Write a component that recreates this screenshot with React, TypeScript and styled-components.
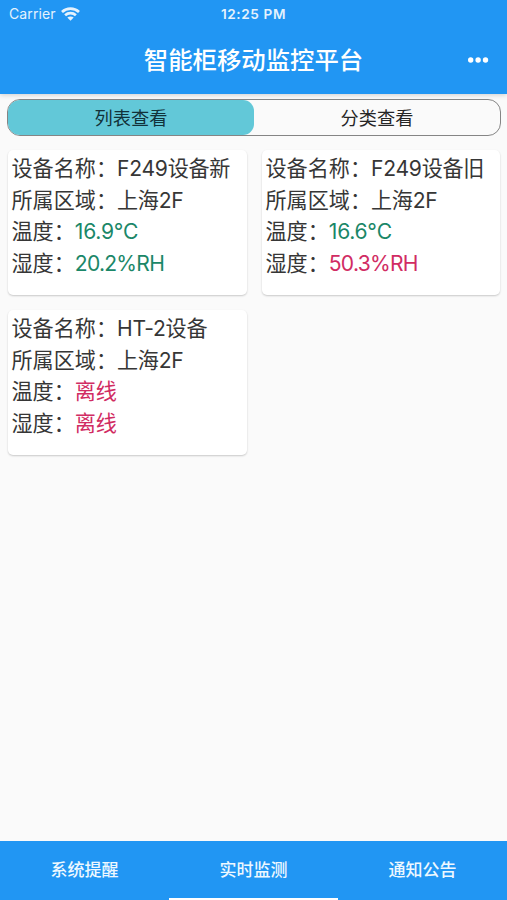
import React from 'react';
import styled, { createGlobalStyle } from 'styled-components';

const GlobalStyle = createGlobalStyle`
  * { box-sizing: border-box; }
  body {
    margin: 0;
    background: #fafafa;
    font-family: Inter, "Noto Sans CJK SC", sans-serif;
  }
`;

const Screen = styled.div`
  display: flex;
  flex-direction: column;
  height: 100vh;
  overflow: hidden;
  background: #fafafa;
`;

const Header = styled.header`
  flex: none;
  height: 94px;
  background: #2196f3;
  color: #fff;
  box-shadow: 0 1px 5px rgba(0, 0, 0, 0.18);
`;

const StatusBar = styled.div`
  display: grid;
  grid-template-columns: 1fr auto 1fr;
  align-items: center;
  height: 27px;
  padding: 0 9px;
  color: #e4f2fd;
`;

const Carrier = styled.div`
  display: flex;
  align-items: center;
  gap: 5.5px;
  font-size: 14px;
  line-height: 18px;
  letter-spacing: 0.12px;
`;

const Clock = styled.time`
  font-size: 13.6px;
  font-weight: 600;
  letter-spacing: 0.6px;
`;

const TitleBar = styled.div`
  display: grid;
  grid-template-columns: 1fr auto 1fr;
  align-items: center;
  height: 65px;
  padding: 0 18px;
`;

const Title = styled.h1`
  grid-column: 2;
  margin: 0;
  font-size: 24.4px;
  font-weight: 500;
  line-height: 36px;
`;

const MoreButton = styled.button`
  display: flex;
  justify-self: end;
  padding: 0;
  border: 0;
  background: none;
  color: inherit;
`;

const Segments = styled.div`
  flex: none;
  display: flex;
  height: 37px;
  margin: 5px 6px 0 7px;
  border: 1px solid #858585;
  border-radius: 13px;
  overflow: hidden;
`;

const Segment = styled.button<{ $active?: boolean }>`
  flex: 1;
  padding: 0;
  border: 0;
  border-radius: 11px;
  background: ${(p) => (p.$active ? '#62c8d8' : 'transparent')};
  color: ${(p) => (p.$active ? '#12323a' : '#262626')};
  font-family: inherit;
  font-size: 18.2px;
  line-height: 34px;
`;

const DeviceGrid = styled.main`
  flex: 1;
  display: grid;
  grid-template-columns: 239px 238px;
  grid-auto-rows: 145px;
  align-content: start;
  gap: 15px;
  padding: 14px 7px 0 8px;
`;

const Card = styled.article`
  padding: 3px 3.5px;
  border-radius: 5px;
  background: #fff;
  box-shadow: 0 1px 2px rgba(0, 0, 0, 0.2);
`;

const Field = styled.div`
  height: 31.7px;
  color: #363636;
  font-size: 21.1px;
  line-height: 32px;
  white-space: nowrap;
`;

type Tone = 'plain' | 'ok' | 'alert';

const toneColors: Record<Tone, string> = {
  plain: '#363636',
  ok: '#1b8768',
  alert: '#d12c63',
};

const Value = styled.span<{ $tone: Tone; $tight?: boolean }>`
  color: ${(p) => toneColors[p.$tone]};
  letter-spacing: ${(p) => (p.$tight ? '-0.75px' : '-0.25px')};
`;

const BottomNav = styled.nav`
  flex: none;
  display: grid;
  grid-template-columns: repeat(3, 1fr);
  grid-template-rows: 57px 2px;
  height: 59px;
  background: #2196f3;
`;

const NavItem = styled.button`
  padding: 0 0 2px;
  border: 0;
  background: none;
  color: #eef8ff;
  font-family: inherit;
  font-size: 17px;
  font-weight: 500;
`;

const HomeIndicator = styled.div`
  grid-column: 2;
  background: #fff;
`;

const WifiIcon = () => (
  <svg width="19" height="14" viewBox="0 0 19 14" fill="none" stroke="currentColor" strokeWidth="2.7">
    <path d="M1 4.9C5.8.4 13.2.4 18 4.9" />
    <path d="M4.1 8.2c3.1-2.8 7.7-2.8 10.8 0" />
    <path d="M9.5 13.8 6.3 10.6c1.7-1.5 4.7-1.5 6.4 0Z" fill="currentColor" stroke="none" />
  </svg>
);

const MoreIcon = () => (
  <svg width="21" height="6" viewBox="0 0 21 6" fill="currentColor">
    <circle cx="2.7" cy="3" r="2.7" />
    <circle cx="10.1" cy="3" r="2.7" />
    <circle cx="17.5" cy="3" r="2.7" />
  </svg>
);

interface Reading {
  text: string;
  tone: Tone;
}

interface Device {
  name: string;
  area: string;
  temperature: Reading;
  humidity: Reading;
}

const devices: Device[] = [
  {
    name: 'F249设备新',
    area: '上海2F',
    temperature: { text: '16.9°C', tone: 'ok' },
    humidity: { text: '20.2%RH', tone: 'ok' },
  },
  {
    name: 'F249设备旧',
    area: '上海2F',
    temperature: { text: '16.6°C', tone: 'ok' },
    humidity: { text: '50.3%RH', tone: 'alert' },
  },
  {
    name: 'HT-2设备',
    area: '上海2F',
    temperature: { text: '离线', tone: 'alert' },
    humidity: { text: '离线', tone: 'alert' },
  },
];

const DeviceCard = ({ device }: { device: Device }) => (
  <Card>
    <Field>设备名称：<Value $tone="plain">{device.name}</Value></Field>
    <Field>所属区域：<Value $tone="plain">{device.area}</Value></Field>
    <Field>温度：<Value $tone={device.temperature.tone}>{device.temperature.text}</Value></Field>
    <Field>
      湿度：
      <Value $tone={device.humidity.tone} $tight={device.humidity.text.endsWith('%RH')}>
        {device.humidity.text}
      </Value>
    </Field>
  </Card>
);

export default function App() {
  return (
    <>
      <GlobalStyle />
      <Screen>
        <Header>
          <StatusBar>
            <Carrier>
              Carrier
              <WifiIcon />
            </Carrier>
            <Clock>12:25 PM</Clock>
          </StatusBar>
          <TitleBar>
            <Title>智能柜移动监控平台</Title>
            <MoreButton aria-label="更多">
              <MoreIcon />
            </MoreButton>
          </TitleBar>
        </Header>
        <Segments>
          <Segment $active>列表查看</Segment>
          <Segment>分类查看</Segment>
        </Segments>
        <DeviceGrid>
          {devices.map((device) => (
            <DeviceCard key={device.name} device={device} />
          ))}
        </DeviceGrid>
        <BottomNav>
          <NavItem>系统提醒</NavItem>
          <NavItem>实时监测</NavItem>
          <NavItem>通知公告</NavItem>
          <HomeIndicator />
        </BottomNav>
      </Screen>
    </>
  );
}
